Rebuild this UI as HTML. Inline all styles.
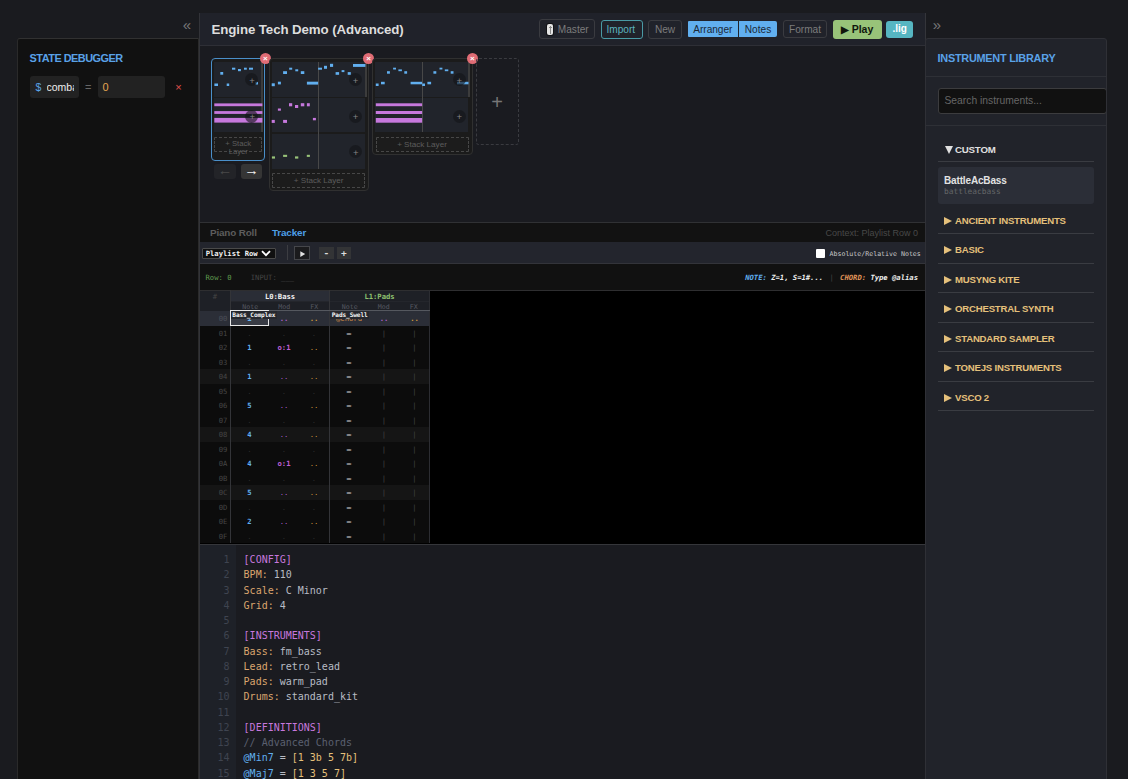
<!DOCTYPE html>
<html lang="en">
<head>
<meta charset="utf-8">
<title>Engine Tech Demo (Advanced)</title>
<style>
*{box-sizing:border-box;margin:0;padding:0}
html,body{width:1128px;height:779px;overflow:hidden;background:#1a1b1f;font-family:"Liberation Sans",Arial,sans-serif;color:#ccc}
.abs{position:absolute}
.mono{font-family:"DejaVu Sans Mono","Liberation Mono",monospace}

/* ---------- left panel ---------- */
#left{position:absolute;left:17px;top:38px;width:182px;height:760px;background:#111;border:1px solid #2a2a2a;border-top-color:#313131;border-radius:3px 0 0 0}
#left h3{position:absolute;left:11.6px;top:13.4px;font-size:10.9px;font-weight:bold;color:#5aa2e8;letter-spacing:-0.5px;white-space:nowrap}
.collapse{position:absolute;font-size:15px;color:#777;line-height:1}
.dbg{position:absolute;top:37px;height:22px;background:#222;border-radius:3px;font-size:10.5px;line-height:22px;white-space:nowrap;overflow:hidden}

/* ---------- center ---------- */
#center{position:absolute;left:200px;top:13px;width:725px;height:780px;background:#191a1f;box-shadow:-1px 0 0 #323338,1px 0 0 #34353a,inset -1px 0 0 #2a2b30}
#hdr{position:absolute;left:0;top:0;width:725px;height:33px;background:#20222a;border-bottom:1px solid #2e2f36}
#hdr h1{position:absolute;left:11.5px;top:9px;font-size:13.3px;font-weight:bold;color:#ddd;white-space:nowrap;letter-spacing:-0.1px}
.btn{position:absolute;border:1px solid #3a3b40;border-radius:3px;font-size:10.1px;color:#7c7c7c;text-align:center;white-space:nowrap}

.seg{border:0;background:#61afef;color:#1b2836}
.micon{position:absolute;left:7px;top:4px;width:6.3px;height:10.8px;background:#e4e4e4;border-radius:2px;box-shadow:0 0 0 1px #121316}
.micon:before{content:"";position:absolute;left:1.6px;top:3.4px;width:3.2px;height:1px;background:#8a8a8a}
.micon:after{content:"";position:absolute;left:2.7px;top:2px;width:1px;height:8px;background:#8a8a8a}


/* ---------- arranger ---------- */
#arr{position:absolute;left:0;top:33px;width:725px;height:176px;background:#1a1b20}
.blk{position:absolute;top:11.5px;background:#1b1b1b;border:1px solid #303030;border-radius:4px}
.blk.sel{border-color:#4a8fc9}
.cell{position:absolute;background:#21242b}
.nt{position:absolute}
.b{background:#61afef}.p{background:#c678dd}.g{background:#98c379}
.vdiv{position:absolute;width:1px;background:#484848}
.sb{position:absolute;width:1.5px;background:#3c3c3c}
.plus{position:absolute;width:13px;height:13px;border-radius:50%;background:rgba(20,21,25,.62);color:#868686;font-size:9.5px;line-height:13px;text-align:center}
.plus span{position:relative;left:0.4px;top:0.6px}
.close{position:absolute;width:11px;height:11px;border-radius:50%;background:#e06c75;color:#fff;font-size:8px;line-height:11.5px;text-align:center;font-weight:bold}
.stack{position:absolute;border:1px dashed #474747;background:#1c1c1c;color:#5c5c5c;font-size:8.1px;text-align:center;line-height:8.5px;border-radius:1px}
.navb{position:absolute;top:118.3px;width:22px;height:14.5px;border-radius:3px;font-size:14.5px;font-weight:bold;line-height:14.5px;text-align:center}
.navb span{position:relative;top:-1px}


/* ---------- tracker ---------- */
#tabs{position:absolute;left:0;top:209px;width:725px;height:20.5px;background:#121212;border-top:1px solid #303134}
#tabs b{position:absolute;top:4px;font-size:9.9px;white-space:nowrap;letter-spacing:-0.15px}
#tbar{position:absolute;left:0;top:229.3px;width:725px;height:21.5px;background:#23252d;border-bottom:1px solid #33343a}
#stat{position:absolute;left:0;top:250.8px;width:725px;height:26.2px;background:#111;font-size:7.2px;line-height:9px;white-space:pre}
#trk{position:absolute;left:0;top:277px;width:725px;height:254.5px;background:#000;border-bottom:1.5px solid #35363a;font-size:7.2px;overflow:hidden}
.tr{position:absolute;left:0;width:229.3px;height:14.5px;background:#0c0c0c;line-height:15.5px}
.tr.beat{background:#151515}
.tr i{position:absolute;font-style:normal;text-align:center}
.tbtn{position:absolute;font-size:7.5px;font-weight:bold;color:#ddd;text-align:center}


/* ---------- editor ---------- */
#ed{position:absolute;left:0;top:531.5px;width:725px;height:250px;background:#1a1b20;font-size:10px;line-height:15.26px;white-space:pre}
#gut{position:absolute;left:0;top:0;width:36px;height:250px;background:#1e2128;color:#3f4450;text-align:right;padding:7.5px 6.5px 0 0}
#code{position:absolute;left:43.6px;top:7.5px;color:#b8bcc4}
.k{color:#dba56e}.s{color:#c678dd}.c{color:#5a6070}.a{color:#61afef}.y{color:#e5c07b}

/* ---------- right panel ---------- */
#right{position:absolute;left:925px;top:38px;width:182px;height:760px;background:#21232a;border:1px solid #2f3036;border-radius:3px 3px 0 0;overflow:hidden}

#right h3{position:absolute;left:11.5px;top:13.3px;font-size:10.9px;font-weight:bold;color:#5aa2e8;white-space:nowrap;letter-spacing:-0.25px}
.hl{position:absolute;left:0;width:181px;height:1px;background:#2e3036}
#search{position:absolute;left:11.5px;top:49px;width:169.6px;height:25.5px;background:#111;border:1px solid #3c3c3e;border-radius:3px;color:#666;font-size:10.3px;line-height:24.6px;padding-left:6px;white-space:nowrap}
.cat{position:absolute;left:11.5px;width:156px;height:29.5px;border-bottom:1px solid #3a3c42;color:#e5c07b;font-size:9.6px;font-weight:bold;white-space:nowrap;padding-left:17.5px;line-height:32px;letter-spacing:-0.2px}
.cat:before{content:"";position:absolute;left:6px;top:12px;border-left:8.3px solid #e5c07b;border-top:4.3px solid transparent;border-bottom:4.3px solid transparent}
</style>
</head>
<body>

<!-- LEFT: state debugger -->
<div class="collapse" style="left:182.8px;top:17.3px">«</div>
<div id="left">
  <h3>STATE DEBUGGER</h3>
  <div class="dbg" style="left:11.5px;width:49px;padding-left:6px"><span style="color:#5aa2e8">$</span><span style="color:#eee;position:absolute;left:17px;top:0;width:27.5px;overflow:hidden">combat</span></div>
  <div class="abs" style="left:67px;top:42px;font-size:11px;color:#666">=</div>
  <div class="dbg" style="left:79.5px;width:67.5px;padding-left:5px;color:#e5a550;font-size:11px">0</div>
  <div class="abs" style="left:157.2px;top:41.5px;font-size:11px;color:#e0524d">×</div>
</div>

<!-- CENTER -->
<div id="center">
  <div id="hdr">
    <h1>Engine Tech Demo (Advanced)</h1>
    <div class="btn" style="left:339px;top:6px;width:56px;height:20px;line-height:19px;padding-left:12.5px"><span class="micon"></span>Master</div>
    <div class="btn" style="left:400.5px;top:6.5px;width:42px;height:19px;line-height:18px;padding-right:1.5px;border-color:#4a9aa5;color:#5cb3bf">Import</div>
    <div class="btn" style="left:448px;top:6.5px;width:34px;height:19px;line-height:18px">New</div>
    <div class="btn seg" style="left:487.7px;top:8px;width:50.3px;height:16px;line-height:17px;border-radius:1px 0 0 1px">Arranger</div>
    <div class="btn seg" style="left:539px;top:8px;width:38px;height:16px;line-height:17px;border-radius:0 2px 2px 0">Notes</div>
    <div class="btn" style="left:583px;top:7px;width:44px;height:18px;line-height:17px">Format</div>
    <div class="btn" style="left:632.5px;top:7px;width:49px;height:18.5px;line-height:18.5px;border:0;background:#98c379;color:#10160c;font-weight:bold;font-size:10.5px"><span style="font-size:10px;position:relative;top:-0.5px">▶</span> Play</div>
    <div class="btn" style="left:686.3px;top:8px;width:26.7px;height:16.5px;line-height:16.5px;border:0;background:#56b6c2;color:#fff;font-weight:bold;font-size:10px">.lig</div>
  </div>
  <div id="arr">
    <div class="blk sel" style="left:11px;width:54px;height:103px"></div>
    <div class="cell" style="left:14.0px;top:15.7px;width:48.5px;height:35.2px"></div>
    <div class="cell" style="left:14.0px;top:52.0px;width:48.5px;height:34.3px"></div>
    <i class="sb" style="left:61.2px;top:15.7px;height:70.6px"></i>
    <div class="stack" style="left:14.3px;top:91px;width:48px;height:15px;padding-top:1.6px;line-height:8.8px;font-size:7.7px">+ Stack<br>Layer</div>
    <div class="close" style="left:59.8px;top:6.5px">×</div>
    <div class="navb" style="left:14px;background:#232428;color:#4a4a4a"><span>←</span></div>
    <div class="navb" style="left:40.7px;width:21.4px;background:#353535;color:#f0f0f0"><span>→</span></div>
    <div class="blk" style="left:68.5px;width:100px;height:133.5px"></div>
    <div class="cell" style="left:71.7px;top:15.7px;width:93.8px;height:35.2px"></div>
    <div class="cell" style="left:71.7px;top:52.0px;width:93.8px;height:34.3px"></div>
    <div class="cell" style="left:71.7px;top:88.0px;width:93.8px;height:34.9px"></div>
    <i class="vdiv" style="left:118px;top:15.7px;height:107.2px"></i>
    <i class="sb" style="left:165px;top:15.7px;height:35.2px"></i>
    <div class="stack" style="left:71.9px;top:127.2px;width:93.5px;height:15px;line-height:14.3px">+ Stack Layer</div>
    <div class="close" style="left:163.0px;top:6.5px">×</div>
    <div class="blk" style="left:171.5px;width:101px;height:97px"></div>
    <div class="cell" style="left:175.3px;top:15.7px;width:93.2px;height:35.2px"></div>
    <div class="cell" style="left:175.3px;top:52.0px;width:93.2px;height:34.3px"></div>
    <i class="vdiv" style="left:222px;top:15.7px;height:70.6px"></i>
    <i class="sb" style="left:268px;top:15.7px;height:35.2px"></i>
    <div class="stack" style="left:175.5px;top:91.2px;width:93px;height:14.5px;line-height:14px">+ Stack Layer</div>
    <div class="close" style="left:266.8px;top:6.5px">×</div>
    <svg class="abs" style="left:0;top:0" width="330" height="130" viewBox="0 0 330 130"><rect x="14.4" y="37.5" width="3.6" height="2.5" fill="#61afef"/><rect x="20.3" y="26.0" width="2.9" height="2.7" fill="#61afef"/><rect x="26.7" y="37.5" width="2.5" height="2.5" fill="#61afef"/><rect x="32.0" y="21.7" width="3.3" height="2.0" fill="#61afef"/><rect x="38.0" y="23.0" width="2.9" height="2.2" fill="#61afef"/><rect x="44.0" y="21.7" width="2.8" height="2.0" fill="#61afef"/><rect x="49.0" y="21.7" width="4.0" height="2.0" fill="#61afef"/><rect x="55.5" y="35.9" width="2.5" height="2.6" fill="#61afef"/><rect x="14.3" y="57.4" width="48.1" height="2.8" fill="#c678dd"/><rect x="14.3" y="65.1" width="48.1" height="2.8" fill="#c678dd"/><rect x="14.3" y="71.9" width="48.1" height="4.7" fill="#c678dd"/><rect x="71.7" y="37.3" width="3.1" height="2.9" fill="#61afef"/><rect x="77.9" y="35.7" width="3.0" height="2.7" fill="#61afef"/><rect x="83.1" y="25.2" width="3.9" height="2.8" fill="#61afef"/><rect x="89.2" y="21.7" width="3.0" height="2.0" fill="#61afef"/><rect x="95.3" y="23.3" width="2.9" height="2.0" fill="#61afef"/><rect x="100.8" y="25.2" width="3.5" height="2.8" fill="#61afef"/><rect x="106.9" y="35.7" width="11.2" height="2.9" fill="#61afef"/><rect x="118.1" y="21.7" width="3.9" height="2.0" fill="#61afef"/><rect x="124.0" y="19.8" width="3.0" height="3.0" fill="#61afef"/><rect x="130.0" y="17.8" width="3.1" height="3.1" fill="#61afef"/><rect x="135.6" y="26.1" width="3.5" height="2.7" fill="#61afef"/><rect x="141.6" y="24.1" width="2.8" height="2.0" fill="#61afef"/><rect x="147.7" y="26.1" width="3.1" height="2.7" fill="#61afef"/><rect x="153.0" y="18.0" width="12.4" height="2.9" fill="#61afef"/><rect x="71.7" y="73.9" width="3.1" height="3.0" fill="#c678dd"/><rect x="77.9" y="62.5" width="3.0" height="2.2" fill="#c678dd"/><rect x="83.1" y="73.9" width="3.9" height="3.0" fill="#c678dd"/><rect x="89.0" y="57.2" width="3.2" height="3.1" fill="#c678dd"/><rect x="95.0" y="59.0" width="3.2" height="3.0" fill="#c678dd"/><rect x="100.8" y="57.2" width="3.5" height="3.1" fill="#c678dd"/><rect x="106.9" y="57.2" width="2.9" height="3.1" fill="#c678dd"/><rect x="112.9" y="71.9" width="3.0" height="2.4" fill="#c678dd"/><rect x="71.9" y="110.4" width="3.1" height="2.2" fill="#98c379"/><rect x="83.1" y="108.8" width="4.0" height="2.1" fill="#98c379"/><rect x="95.0" y="110.4" width="3.3" height="2.2" fill="#98c379"/><rect x="106.8" y="108.8" width="3.1" height="2.1" fill="#98c379"/><rect x="175.8" y="37.5" width="2.8" height="2.5" fill="#61afef"/><rect x="181.0" y="35.8" width="3.7" height="2.5" fill="#61afef"/><rect x="187.0" y="25.2" width="2.9" height="2.5" fill="#61afef"/><rect x="193.1" y="21.7" width="2.9" height="1.8" fill="#61afef"/><rect x="198.4" y="23.4" width="3.5" height="1.8" fill="#61afef"/><rect x="204.3" y="25.2" width="2.8" height="2.5" fill="#61afef"/><rect x="210.6" y="35.8" width="11.5" height="2.5" fill="#61afef"/><rect x="222.2" y="37.5" width="2.8" height="2.5" fill="#61afef"/><rect x="227.4" y="35.8" width="3.7" height="2.5" fill="#61afef"/><rect x="233.4" y="25.2" width="2.9" height="2.5" fill="#61afef"/><rect x="239.5" y="21.7" width="2.9" height="1.8" fill="#61afef"/><rect x="244.8" y="23.4" width="3.5" height="1.8" fill="#61afef"/><rect x="250.7" y="25.2" width="2.8" height="2.5" fill="#61afef"/><rect x="257.0" y="35.8" width="11.5" height="2.5" fill="#61afef"/><rect x="175.8" y="57.3" width="46.3" height="2.9" fill="#c678dd"/><rect x="175.8" y="65.0" width="46.3" height="3.0" fill="#c678dd"/><rect x="175.8" y="72.0" width="46.3" height="4.7" fill="#c678dd"/></svg>
    <div class="plus" style="left:45.1px;top:27.0px"><span>+</span></div>
    <div class="plus" style="left:45.3px;top:63.5px"><span>+</span></div>
    <div class="plus" style="left:148.7px;top:27.3px"><span>+</span></div>
    <div class="plus" style="left:148.7px;top:63.7px"><span>+</span></div>
    <div class="plus" style="left:148.8px;top:99.0px"><span>+</span></div>
    <div class="plus" style="left:252.5px;top:27.2px"><span>+</span></div>
    <div class="plus" style="left:252.5px;top:63.6px"><span>+</span></div>
    <div class="abs" style="left:275.5px;top:11.5px;width:43px;height:87.5px;border:1px dashed #3a3b40;border-radius:3px;color:#777;font-size:20px;line-height:87px;text-align:center;font-weight:normal">+</div>
    </div>
  <div id="tabs"><b style="left:10px;color:#5d5d5d">Piano Roll</b><b style="left:72px;color:#4d9fe8">Tracker</b><span class="abs" style="right:7px;top:4.8px;font-size:9px;color:#484848;white-space:nowrap">Context: Playlist Row 0</span></div>
  <div id="tbar" class="mono">
      <div class="abs" style="left:1.7px;top:5.5px;width:74px;height:11px;background:#101010;border:1px solid #4a4a4a;border-radius:1px;color:#f2f2f2;font-size:7.2px;font-weight:bold;line-height:9px;padding-left:3px;white-space:nowrap">Playlist Row<svg style="position:absolute;left:58.5px;top:1.5px" width="10" height="7" viewBox="0 0 10 7"><path d="M1 1.2 L5 5.2 L9 1.2" fill="none" stroke="#fff" stroke-width="1.8"/></svg></div>
      <div class="abs" style="left:87px;top:3px;width:1px;height:15px;background:#3c3d42"></div>
      <div class="tbtn" style="left:93.7px;top:3.3px;width:16.2px;height:14.8px;border:1px solid #45464a;background:#1b1b1d;line-height:12px;font-size:6px"><svg style="position:absolute;left:5.3px;top:4.2px" width="6" height="7" viewBox="0 0 6 7"><path d="M0.3 0.3 L5.2 3.1 L0.3 5.9 Z" fill="#e2e2e2"/></svg></div>
      <div class="tbtn" style="left:119px;top:4.7px;width:14.7px;height:12.5px;background:#333436;line-height:11.8px;font-size:9.5px">-</div>
      <div class="tbtn" style="left:136.5px;top:4.7px;width:14.7px;height:12.5px;background:#333436;line-height:11.8px;font-size:9.5px">+</div>
      <div class="abs" style="left:615.5px;top:6.8px;width:9px;height:9px;background:#fff;border-radius:1px"></div>
      <div class="abs" style="left:629.5px;top:7.5px;font-size:6.6px;line-height:8px;color:#c8c8c8;white-space:nowrap">Absolute/Relative Notes</div>
    </div>
  <div id="stat" class="mono"><span class="abs" style="left:5.5px;top:9.5px;color:#5f9a4f">Row: 0</span><span class="abs" style="left:50.8px;top:9.5px;color:#444">INPUT: <span style="color:#555">___</span></span><span class="abs" style="right:7px;top:9.5px;font-weight:bold;font-style:italic;color:#eee"><span style="color:#61afef">NOTE:</span> Z=1, S=1#... <span style="color:#444;font-style:normal;font-weight:normal;margin:0 2px">|</span> <span style="color:#e0955a">CHORD:</span> Type @alias</span></div>
  <div id="trk" class="mono">
    <div class="abs" style="left:0;top:0;width:229.3px;height:20.5px;background:#1e2026"></div>
    <div class="abs" style="left:30.3px;top:0;width:99.5px;height:11.3px;background:#2a2d36"></div>
    <div class="abs" style="left:0;top:0;width:30px;height:11.3px;line-height:13.2px;text-align:center;color:#444">#</div>
    <div class="abs" style="left:30.3px;top:0;width:99.5px;height:11.3px;line-height:13.2px;text-align:center;color:#f0f0f0;font-weight:bold">L0:Bass</div>
    <div class="abs" style="left:129.8px;top:0;width:99.5px;height:11.3px;line-height:13.2px;text-align:center;color:#8fc070;font-weight:bold">L1:Pads</div>
    <div class="abs" style="left:30.3px;top:11.3px;width:99.5px;height:8.7px;line-height:10px;color:#565962;font-size:6.6px;border-top:1px solid #24262c"><span class="abs" style="left:0;width:40px;text-align:center">Note</span><span class="abs" style="left:33px;width:42px;text-align:center">Mod</span><span class="abs" style="left:73px;width:22px;text-align:center">FX</span></div>
    <div class="abs" style="left:129.8px;top:11.3px;width:99.5px;height:8.7px;line-height:10px;color:#565962;font-size:6.6px;border-top:1px solid #24262c"><span class="abs" style="left:0;width:40px;text-align:center">Note</span><span class="abs" style="left:33px;width:42px;text-align:center">Mod</span><span class="abs" style="left:73px;width:22px;text-align:center">FX</span></div>
    <div class="tr beat" style="top:20.50px;background:#2b2e37;height:15.25px"><i style="left:12px;width:22px;color:#4b4f59">00</i><i style="left:38.5px;width:22px;color:#61afef;font-weight:bold;top:0.3px">1</i><i style="left:73px;width:22px;color:#b05fd0;top:0px;font-weight:bold">..</i><i style="left:103px;width:22px;color:#d59a3a;top:0px;font-weight:bold">..</i><i style="left:134px;width:30px;color:#d08a45;top:0.3px">@Chord</i><i style="left:173px;width:22px;color:#b05fd0;top:0px;font-weight:bold">..</i><i style="left:203.5px;width:22px;color:#d59a3a;top:0px;font-weight:bold">..</i></div>
    <div class="tr" style="top:35.75px"><i style="left:12px;width:22px;color:#464646">01</i><i style="left:38.5px;width:22px;color:#2c2c2c">.</i><i style="left:73px;width:22px;color:#2c2c2c">.</i><i style="left:103px;width:22px;color:#2c2c2c">.</i><i style="left:136px;width:26px;color:#e8e8e8;font-weight:bold">—</i><i style="left:173px;width:22px;color:#444">|</i><i style="left:203.5px;width:22px;color:#444">|</i></div>
    <div class="tr" style="top:50.25px"><i style="left:12px;width:22px;color:#464646">02</i><i style="left:38.5px;width:22px;color:#61afef;font-weight:bold">1</i><i style="left:73px;width:22px;color:#c060d8;font-weight:bold">o:1</i><i style="left:103px;width:22px;color:#d59a3a">..</i><i style="left:136px;width:26px;color:#e8e8e8;font-weight:bold">—</i><i style="left:173px;width:22px;color:#444">|</i><i style="left:203.5px;width:22px;color:#444">|</i></div>
    <div class="tr" style="top:64.75px"><i style="left:12px;width:22px;color:#464646">03</i><i style="left:38.5px;width:22px;color:#2c2c2c">.</i><i style="left:73px;width:22px;color:#2c2c2c">.</i><i style="left:103px;width:22px;color:#2c2c2c">.</i><i style="left:136px;width:26px;color:#e8e8e8;font-weight:bold">—</i><i style="left:173px;width:22px;color:#444">|</i><i style="left:203.5px;width:22px;color:#444">|</i></div>
    <div class="tr beat" style="top:79.25px"><i style="left:12px;width:22px;color:#464646">04</i><i style="left:38.5px;width:22px;color:#61afef;font-weight:bold">1</i><i style="left:73px;width:22px;color:#b05fd0">..</i><i style="left:103px;width:22px;color:#d59a3a">..</i><i style="left:136px;width:26px;color:#e8e8e8;font-weight:bold">—</i><i style="left:173px;width:22px;color:#444">|</i><i style="left:203.5px;width:22px;color:#444">|</i></div>
    <div class="tr" style="top:93.75px"><i style="left:12px;width:22px;color:#464646">05</i><i style="left:38.5px;width:22px;color:#2c2c2c">.</i><i style="left:73px;width:22px;color:#2c2c2c">.</i><i style="left:103px;width:22px;color:#2c2c2c">.</i><i style="left:136px;width:26px;color:#e8e8e8;font-weight:bold">—</i><i style="left:173px;width:22px;color:#444">|</i><i style="left:203.5px;width:22px;color:#444">|</i></div>
    <div class="tr" style="top:108.25px"><i style="left:12px;width:22px;color:#464646">06</i><i style="left:38.5px;width:22px;color:#61afef;font-weight:bold">5</i><i style="left:73px;width:22px;color:#b05fd0">..</i><i style="left:103px;width:22px;color:#d59a3a">..</i><i style="left:136px;width:26px;color:#e8e8e8;font-weight:bold">—</i><i style="left:173px;width:22px;color:#444">|</i><i style="left:203.5px;width:22px;color:#444">|</i></div>
    <div class="tr" style="top:122.75px"><i style="left:12px;width:22px;color:#464646">07</i><i style="left:38.5px;width:22px;color:#2c2c2c">.</i><i style="left:73px;width:22px;color:#2c2c2c">.</i><i style="left:103px;width:22px;color:#2c2c2c">.</i><i style="left:136px;width:26px;color:#e8e8e8;font-weight:bold">—</i><i style="left:173px;width:22px;color:#444">|</i><i style="left:203.5px;width:22px;color:#444">|</i></div>
    <div class="tr beat" style="top:137.25px"><i style="left:12px;width:22px;color:#464646">08</i><i style="left:38.5px;width:22px;color:#61afef;font-weight:bold">4</i><i style="left:73px;width:22px;color:#b05fd0">..</i><i style="left:103px;width:22px;color:#d59a3a">..</i><i style="left:136px;width:26px;color:#e8e8e8;font-weight:bold">—</i><i style="left:173px;width:22px;color:#444">|</i><i style="left:203.5px;width:22px;color:#444">|</i></div>
    <div class="tr" style="top:151.75px"><i style="left:12px;width:22px;color:#464646">09</i><i style="left:38.5px;width:22px;color:#2c2c2c">.</i><i style="left:73px;width:22px;color:#2c2c2c">.</i><i style="left:103px;width:22px;color:#2c2c2c">.</i><i style="left:136px;width:26px;color:#e8e8e8;font-weight:bold">—</i><i style="left:173px;width:22px;color:#444">|</i><i style="left:203.5px;width:22px;color:#444">|</i></div>
    <div class="tr" style="top:166.25px"><i style="left:12px;width:22px;color:#464646">0A</i><i style="left:38.5px;width:22px;color:#61afef;font-weight:bold">4</i><i style="left:73px;width:22px;color:#c060d8;font-weight:bold">o:1</i><i style="left:103px;width:22px;color:#d59a3a">..</i><i style="left:136px;width:26px;color:#e8e8e8;font-weight:bold">—</i><i style="left:173px;width:22px;color:#444">|</i><i style="left:203.5px;width:22px;color:#444">|</i></div>
    <div class="tr" style="top:180.75px"><i style="left:12px;width:22px;color:#464646">0B</i><i style="left:38.5px;width:22px;color:#2c2c2c">.</i><i style="left:73px;width:22px;color:#2c2c2c">.</i><i style="left:103px;width:22px;color:#2c2c2c">.</i><i style="left:136px;width:26px;color:#e8e8e8;font-weight:bold">—</i><i style="left:173px;width:22px;color:#444">|</i><i style="left:203.5px;width:22px;color:#444">|</i></div>
    <div class="tr beat" style="top:195.25px"><i style="left:12px;width:22px;color:#464646">0C</i><i style="left:38.5px;width:22px;color:#61afef;font-weight:bold">5</i><i style="left:73px;width:22px;color:#b05fd0">..</i><i style="left:103px;width:22px;color:#d59a3a">..</i><i style="left:136px;width:26px;color:#e8e8e8;font-weight:bold">—</i><i style="left:173px;width:22px;color:#444">|</i><i style="left:203.5px;width:22px;color:#444">|</i></div>
    <div class="tr" style="top:209.75px"><i style="left:12px;width:22px;color:#464646">0D</i><i style="left:38.5px;width:22px;color:#2c2c2c">.</i><i style="left:73px;width:22px;color:#2c2c2c">.</i><i style="left:103px;width:22px;color:#2c2c2c">.</i><i style="left:136px;width:26px;color:#e8e8e8;font-weight:bold">—</i><i style="left:173px;width:22px;color:#444">|</i><i style="left:203.5px;width:22px;color:#444">|</i></div>
    <div class="tr" style="top:224.25px"><i style="left:12px;width:22px;color:#464646">0E</i><i style="left:38.5px;width:22px;color:#61afef;font-weight:bold">2</i><i style="left:73px;width:22px;color:#b05fd0">..</i><i style="left:103px;width:22px;color:#d59a3a">..</i><i style="left:136px;width:26px;color:#e8e8e8;font-weight:bold">—</i><i style="left:173px;width:22px;color:#444">|</i><i style="left:203.5px;width:22px;color:#444">|</i></div>
    <div class="tr" style="top:238.75px"><i style="left:12px;width:22px;color:#464646">0F</i><i style="left:38.5px;width:22px;color:#2c2c2c">.</i><i style="left:73px;width:22px;color:#2c2c2c">.</i><i style="left:103px;width:22px;color:#2c2c2c">.</i><i style="left:136px;width:26px;color:#e8e8e8;font-weight:bold">—</i><i style="left:173px;width:22px;color:#444">|</i><i style="left:203.5px;width:22px;color:#444">|</i></div>
    <div class="abs" style="left:0;top:0;width:725px;height:1px;background:#2e2e30"></div><div class="abs" style="left:30px;top:0;width:1px;height:253px;background:#333438"></div>
    <div class="abs" style="left:129.3px;top:0;width:1px;height:253px;background:#333438"></div>
    <div class="abs" style="left:229px;top:0;width:1px;height:253px;background:#2c2d32"></div>
    <div class="abs" style="left:30.5px;top:20.2px;width:199px;height:1px;background:#55585f"></div>
    <div class="abs" style="left:30px;top:20.4px;width:38.7px;height:15.5px;border:1px solid #e8e8e8;background:rgba(255,255,255,.07)"></div>
    <div class="abs" style="left:31px;top:21.3px;padding:0 1.2px 0 1.3px;background:#26282e;font-size:6.15px;font-weight:bold;color:#f4f4f4;line-height:7.6px;letter-spacing:-0.1px">Bass_Complex</div>
    <div class="abs" style="left:130.4px;top:21.3px;padding:0 1.2px 0 1.3px;background:#26282e;font-size:6.15px;font-weight:bold;color:#f4f4f4;line-height:7.6px;letter-spacing:-0.1px">Pads_Swell</div>
    </div>
  <div id="ed" class="mono"><div id="gut">1
2
3
4
5
6
7
8
9
10
11
12
13
14
15
16</div><div id="code"><span class="s">[CONFIG]</span>
<span class="k">BPM:</span> 110
<span class="k">Scale:</span> C Minor
<span class="k">Grid:</span> 4

<span class="s">[INSTRUMENTS]</span>
<span class="k">Bass:</span> fm_bass
<span class="k">Lead:</span> retro_lead
<span class="k">Pads:</span> warm_pad
<span class="k">Drums:</span> standard_kit

<span class="s">[DEFINITIONS]</span>
<span class="c">// Advanced Chords</span>
<span class="a">@Min7</span> = <span class="y">[1 3b 5 7b]</span>
<span class="a">@Maj7</span> = <span class="y">[1 3 5 7]</span>
<span class="a">@Dom7</span> = <span class="y">[1 3 5 7b]</span></div></div>
</div>

<!-- RIGHT: instrument library -->
<div class="collapse" style="left:932.8px;top:17.3px">»</div>
<div id="right">
  <h3>INSTRUMENT LIBRARY</h3>
  <div class="hl" style="top:37px"></div>
  <div id="search">Search instruments...</div>
  <div class="hl" style="top:85.8px"></div>
  <div class="abs" style="left:11.5px;top:97px;width:156px;height:26px;border-bottom:1px solid #3a3c42;color:#e0e0e0;font-size:9.7px;font-weight:bold;padding-left:17.5px;line-height:27px;letter-spacing:-0.2px">CUSTOM<i style="position:absolute;left:7px;top:10px;border-top:8px solid #e0e0e0;border-left:4.2px solid transparent;border-right:4.2px solid transparent"></i></div>
  <div class="abs" style="left:11.5px;top:128.3px;width:156px;height:36.5px;background:#2b2e37;border-radius:3px"><b class="abs" style="left:6.5px;top:8px;font-size:10px;color:#e2e2e2;line-height:12px;letter-spacing:-0.15px">BattleAcBass</b><span class="abs mono" style="left:6.5px;top:19.5px;font-size:7.85px;color:#646668;line-height:10px">battleacbass</span></div>
  <div class="cat" style="top:165.50px">ANCIENT INSTRUMENTS</div>
  <div class="cat" style="top:195.05px">BASIC</div>
  <div class="cat" style="top:224.60px">MUSYNG KITE</div>
  <div class="cat" style="top:254.15px">ORCHESTRAL SYNTH</div>
  <div class="cat" style="top:283.70px">STANDARD SAMPLER</div>
  <div class="cat" style="top:313.25px">TONEJS INSTRUMENTS</div>
  <div class="cat" style="top:342.80px">VSCO 2</div>
</div>

</body>
</html>
